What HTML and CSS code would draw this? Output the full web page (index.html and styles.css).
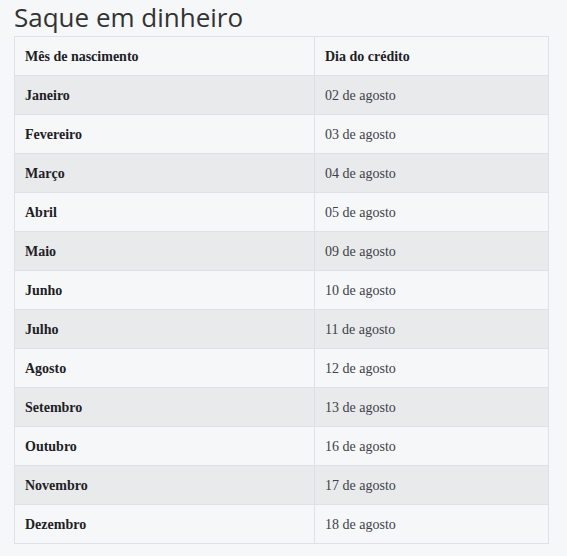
FILE: index.html
```html
<!DOCTYPE html>
<html lang="pt">
<head>
<meta charset="utf-8">
<link rel="stylesheet" href="styles.css">
</head>
<body>
<h2 class="title">Saque em dinheiro</h2>
<table class="calendar">
  <thead>
    <tr><th class="col-month">Mês de nascimento</th><th>Dia do crédito</th></tr>
  </thead>
  <tbody>
    <tr><th>Janeiro</th><td>02 de agosto</td></tr>
    <tr><th>Fevereiro</th><td>03 de agosto</td></tr>
    <tr><th>Março</th><td>04 de agosto</td></tr>
    <tr><th>Abril</th><td>05 de agosto</td></tr>
    <tr><th>Maio</th><td>09 de agosto</td></tr>
    <tr><th>Junho</th><td>10 de agosto</td></tr>
    <tr><th>Julho</th><td>11 de agosto</td></tr>
    <tr><th>Agosto</th><td>12 de agosto</td></tr>
    <tr><th>Setembro</th><td>13 de agosto</td></tr>
    <tr><th>Outubro</th><td>16 de agosto</td></tr>
    <tr><th>Novembro</th><td>17 de agosto</td></tr>
    <tr><th>Dezembro</th><td>18 de agosto</td></tr>
  </tbody>
</table>
</body>
</html>
```

FILE: styles.css
```css
html, body {
  margin: 0;
  padding: 0;
  background: #f6f7f9;
}
body {
  padding: 0 18px 0 14px;
}
.title {
  margin: 0 0 4px;
  padding-top: 2px;
  font-family: "Open Sans", sans-serif;
  font-weight: 400;
  font-size: 26px;
  line-height: 30px;
  color: #333;
}
.calendar {
  width: 535px;
  border-collapse: collapse;
  font-family: "Liberation Serif", serif;
  font-size: 14px;
}
.calendar th,
.calendar td {
  height: 37px;
  padding: 1px 10px 0;
  border: 1px solid #dee2e6;
  text-align: left;
  vertical-align: middle;
}
.calendar th {
  font-weight: 700;
  color: #1d2126;
}
.calendar .col-month {
  width: 279px;
}
.calendar td {
  color: #3d4147;
}
.calendar tbody tr:nth-child(odd) {
  background: #e9eaec;
}
```
